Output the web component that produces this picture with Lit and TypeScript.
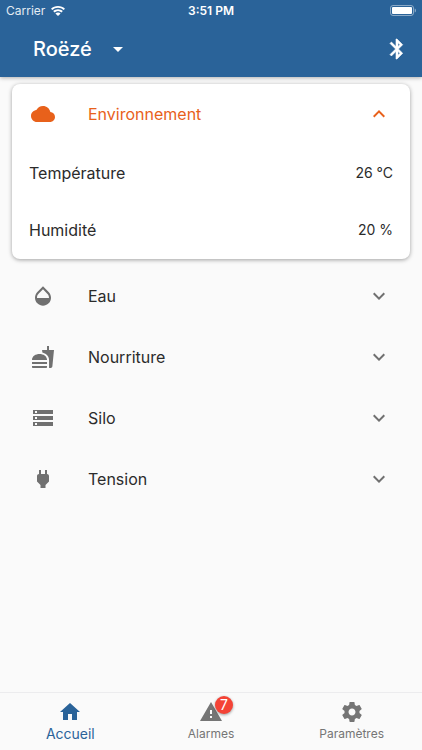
import { LitElement, html, css, svg, nothing } from "lit";
import { customElement, state } from "lit/decorators.js";
import { classMap } from "lit/directives/class-map.js";

const icons: Record<string, string> = {
  cloud:
    "M19.35 10.04C18.67 6.59 15.64 4 12 4 9.11 4 6.6 5.64 5.35 8.04 2.34 8.36 0 10.91 0 14c0 3.31 2.69 6 6 6h13c2.76 0 5-2.24 5-5 0-2.64-2.05-4.78-4.65-4.96z",
  opacity:
    "M17.66 8L12 2.35 6.34 8C4.78 9.56 4 11.64 4 13.64s.78 4.11 2.34 5.67 3.61 2.35 5.66 2.35 4.1-.79 5.66-2.35S20 15.64 20 13.64 19.22 9.56 17.66 8zM6 14c.01-2 .62-3.27 1.76-4.4L12 5.27l4.24 4.38C17.38 10.77 17.99 12 18 14H6z",
  fastfood:
    "M18.06 22.99h1.66c.84 0 1.53-.64 1.63-1.46L23 5.05h-5V1h-1.97v4.05h-4.97l.3 2.34c1.71.47 3.31 1.32 4.27 2.26 1.44 1.42 2.43 2.89 2.43 5.29v8.05zM1 21.99V21h15.03v.99c0 .55-.45 1-1.01 1H2.01c-.56 0-1.01-.45-1.01-1zm15.03-7c0-8-15.03-8-15.03 0h15.03zM1.02 17h15v2h-15z",
  storage:
    "M2 20h20v-4H2v4zm2-3h2v2H4v-2zM2 4v4h20V4H2zm4 3H4V5h2v2zm-4 7h20v-4H2v4zm2-3h2v2H4v-2z",
  power:
    "M16.01 7L16 3h-2v4h-4V3H8v4h-.01C7 6.99 6 7.99 6 8.99v5.49L9.5 18v3h5v-3l3.5-3.51v-5.5c0-1-1-2-1.99-1.99z",
  more: "M16.59 8.59L12 13.17 7.41 8.59 6 10l6 6 6-6z",
  less: "M12 8l-6 6 1.41 1.41L12 10.83l4.59 4.58L18 14z",
  dropdown: "M7 10l5 5 5-5z",
  bluetooth:
    "M17.71 7.71L12 2h-1v7.59L6.41 5 5 6.41 10.59 12 5 17.59 6.41 19 11 14.41V22h1l5.71-5.71-4.3-4.29 4.3-4.29zM13 5.83l1.88 1.88L13 9.59V5.83zm1.88 10.46L13 18.17v-3.76l1.88 1.88z",
  home: "M10 20v-6h4v6h5v-8h3L12 3 2 12h3v8z",
  warning: "M1 21h22L12 2 1 21zm12-3h-2v-2h2v2zm0-4h-2v-4h2v4z",
  settings:
    "M19.43 12.98c.04-.32.07-.64.07-.98s-.03-.66-.07-.98l2.11-1.65c.19-.15.24-.42.12-.64l-2-3.46c-.12-.22-.39-.3-.61-.22l-2.49 1c-.52-.4-1.08-.73-1.69-.98l-.38-2.65C14.46 2.18 14.25 2 14 2h-4c-.25 0-.46.18-.49.42l-.38 2.65c-.61.25-1.17.59-1.69.98l-2.49-1c-.23-.09-.49 0-.61.22l-2 3.46c-.13.22-.07.49.12.64l2.11 1.65c-.04.32-.07.65-.07.98s.03.66.07.98l-2.11 1.65c-.19.15-.24.42-.12.64l2 3.46c.12.22.39.3.61.22l2.49-1c.52.4 1.08.73 1.69.98l.38 2.65c.03.24.24.42.49.42h4c.25 0 .46-.18.49-.42l.38-2.65c.61-.25 1.17-.59 1.69-.98l2.49 1c.23.09.49 0 .61-.22l2-3.46c.12-.22.07-.49-.12-.64l-2.11-1.65zM12 15.5c-1.93 0-3.5-1.57-3.5-3.5s1.57-3.5 3.5-3.5 3.5 1.57 3.5 3.5-1.57 3.5-3.5 3.5z",
};

const icon = (name: string) => html`
  <svg class="icon" viewBox="0 0 24 24" aria-hidden="true">${svg`<path d=${icons[name]}></path>`}</svg>
`;

interface Section {
  id: string;
  title: string;
  icon: string;
  readings: [string, string][];
}

const sections: Section[] = [
  {
    id: "environnement",
    title: "Environnement",
    icon: "cloud",
    readings: [
      ["Température", "26 °C"],
      ["Humidité", "20 %"],
    ],
  },
  { id: "eau", title: "Eau", icon: "opacity", readings: [] },
  { id: "nourriture", title: "Nourriture", icon: "fastfood", readings: [] },
  { id: "silo", title: "Silo", icon: "storage", readings: [] },
  { id: "tension", title: "Tension", icon: "power", readings: [] },
];

const tabs = [
  { id: "accueil", label: "Accueil", icon: "home", count: 0 },
  { id: "alarmes", label: "Alarmes", icon: "warning", count: 7 },
  { id: "parametres", label: "Paramètres", icon: "settings", count: 0 },
];

@customElement("app-root")
export class AppRoot extends LitElement {
  @state() private open = "environnement";
  @state() private tab = "accueil";

  static styles = css`
    :host {
      display: flex;
      flex-direction: column;
      min-height: 100vh;
      background: #fafafa;
      color: #2b2b2b;
      font-family: Inter, "Liberation Sans", sans-serif;
      font-size: 16px;
      line-height: 20px;
    }
    button,
    select {
      border: 0;
      margin: 0;
      padding: 0;
      background: none;
      color: inherit;
      font: inherit;
      cursor: pointer;
    }
    .icon {
      display: block;
      width: 24px;
      height: 24px;
      fill: currentColor;
    }
    .top {
      background: #2a6399;
      color: #fff;
      box-shadow: 0 1px 4px rgba(0, 0, 0, 0.3);
    }
    .status {
      display: grid;
      grid-template-columns: 1fr auto 1fr;
      align-items: center;
      height: 22px;
      padding: 0 6px;
      font-size: 12px;
      line-height: 16px;
    }
    .carrier {
      display: flex;
      align-items: center;
      gap: 6px;
      color: #e4ecf3;
    }
    .wifi {
      width: 14px;
      height: 10px;
      fill: #fff;
    }
    .time {
      font-weight: 600;
    }
    .battery {
      justify-self: end;
      width: 26px;
      height: 12px;
    }
    .toolbar {
      display: flex;
      align-items: center;
      justify-content: space-between;
      height: 54px;
      padding: 0 13px 1px 33px;
    }
    .site {
      display: grid;
      align-items: center;
      grid-template-columns: auto 24px;
    }
    .site select {
      grid-area: 1 / 1 / 2 / 3;
      appearance: none;
      padding-right: 38px;
      font-size: 20px;
      font-weight: 500;
      line-height: 28px;
    }
    .site option {
      color: #2b2b2b;
    }
    .site .icon {
      grid-area: 1 / 2;
      pointer-events: none;
    }
    .bluetooth .icon {
      stroke: currentColor;
      stroke-width: 0.6;
    }
    .list {
      flex: 1;
      padding: 7px 12px;
    }
    .section {
      border-radius: 8px;
      padding-bottom: 1px;
    }
    .section.open {
      background: #fff;
      margin-bottom: 7px;
      box-shadow: 0 1px 4px rgba(0, 0, 0, 0.36);
    }
    h2 {
      margin: 0;
      font: inherit;
    }
    .toggle {
      display: flex;
      align-items: center;
      width: 100%;
      height: 60px;
      padding: 0 19px;
      text-align: left;
    }
    .toggle .icon {
      color: #707070;
    }
    .toggle span {
      flex: 1;
      padding-left: 33px;
    }
    .open .toggle,
    .open .toggle .icon {
      color: #e8611b;
    }
    dl {
      margin: 0;
    }
    .reading {
      display: flex;
      align-items: center;
      justify-content: space-between;
      height: 57px;
      padding: 0 17px;
    }
    dd {
      margin: 0;
      font-size: 14px;
    }
    .tabs {
      display: grid;
      grid-template-columns: repeat(3, 1fr);
      height: 57px;
      border-top: 1px solid #ececee;
      position: sticky;
      bottom: 0;
      background: #fafafa;
    }
    .tab {
      display: flex;
      flex-direction: column;
      align-items: center;
      justify-content: center;
      gap: 1px;
      color: #757575;
      font-size: 12px;
      line-height: 18px;
    }
    .tab.current {
      color: #2a6399;
      font-size: 14px;
    }
    .tab-icon {
      position: relative;
    }
    .badge {
      position: absolute;
      top: -4px;
      right: -10px;
      width: 18px;
      height: 18px;
      border-radius: 50%;
      background: #f44336;
      color: #fff;
      font-size: 14px;
      line-height: 18px;
      text-align: center;
      box-shadow: 0 1px 3px rgba(0, 0, 0, 0.4);
    }
  `;

  render() {
    return html`
      <header class="top">
        <div class="status">
          <div class="carrier">
            Carrier
            <svg class="wifi" viewBox="0 0 14 10" aria-hidden="true">
              <path d="M7 0C4.300 0 1.800 1 0 2.700L1.300 4.100A8.300 8.300 0 0 1 12.700 4.100L14 2.700C12.200 1 9.700 0 7 0z"></path>
              <path d="M7 3.300C5.200 3.300 3.500 4 2.200 5.100L3.500 6.500A5.200 5.200 0 0 1 10.500 6.500L11.800 5.100C10.500 4 8.800 3.300 7 3.300z"></path>
              <path d="M7 6.500C6 6.500 5.100 6.900 4.400 7.400L7 10L9.600 7.400C8.900 6.900 8 6.500 7 6.500z"></path>
            </svg>
          </div>
          <div class="time">3:51 PM</div>
          <svg class="battery" viewBox="0 0 26 12" role="img" aria-label="Batterie">
            <rect x="0.500" y="0.500" width="23" height="10" rx="2.500" fill="none" stroke="#fff" stroke-opacity="0.450"></rect>
            <rect x="2" y="2" width="20" height="7" rx="1" fill="#fff"></rect>
            <path d="M24.700 3.500v4c.8-.4 1.300-1.100 1.300-2s-.5-1.600-1.300-2z" fill="#fff" fill-opacity="0.450"></path>
          </svg>
        </div>
        <div class="toolbar">
          <div class="site">
            <select aria-label="Site">
              <option>Roëzé</option>
            </select>
            ${icon("dropdown")}
          </div>
          <button class="bluetooth" aria-label="Bluetooth">${icon("bluetooth")}</button>
        </div>
      </header>
      <main class="list">${sections.map((s) => this.renderSection(s))}</main>
      <nav class="tabs">
        ${tabs.map(
          (t) => html`
            <button
              class=${classMap({ tab: true, current: t.id === this.tab })}
              aria-current=${t.id === this.tab ? "page" : "false"}
              @click=${() => (this.tab = t.id)}
            >
              <div class="tab-icon">
                ${icon(t.icon)}${t.count ? html`<span class="badge">${t.count}</span>` : nothing}
              </div>
              <span>${t.label}</span>
            </button>
          `
        )}
      </nav>
    `;
  }

  private renderSection(s: Section) {
    const open = s.id === this.open;
    return html`
      <section class=${classMap({ section: true, open })}>
        <h2>
          <button
            class="toggle"
            aria-expanded=${open ? "true" : "false"}
            @click=${() => (this.open = open ? "" : s.id)}
          >
            ${icon(s.icon)}<span>${s.title}</span>${icon(open ? "less" : "more")}
          </button>
        </h2>
        ${open
          ? html`<dl>
              ${s.readings.map(
                ([name, value]) => html`<div class="reading"><dt>${name}</dt><dd>${value}</dd></div>`
              )}
            </dl>`
          : nothing}
      </section>
    `;
  }
}
